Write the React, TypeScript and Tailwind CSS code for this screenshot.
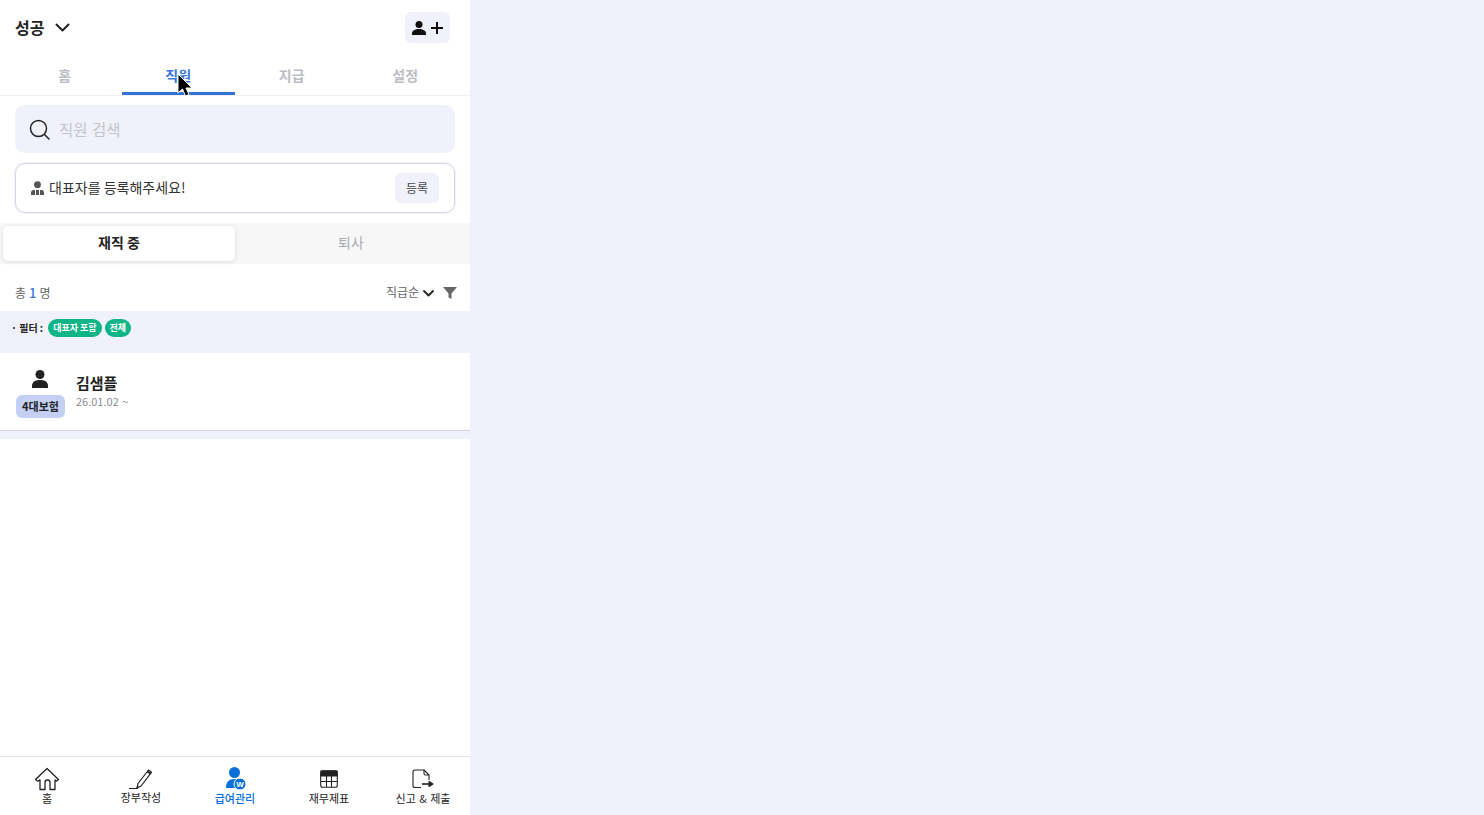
import React from 'react';

const navItems = ['홈', '직원', '지급', '설정'];

const HomeIcon = () => (
    <svg width="26" height="24" viewBox="0 0 26 24" fill="none" stroke="#222" strokeWidth="1.3" strokeLinejoin="round">
        <path d="M1.5 12.5 13 1.5l11.5 11-2.2 1.6-1.3-1.2V22.500h-5V15.500a2.500 2.500 0 0 0-5 0V22.500H6V12.900l-2.300 1.300z" />
    </svg>
);

const PenIcon = () => (
    <svg width="26" height="22" viewBox="0 0 26 22" fill="none" stroke="#222" strokeWidth="1.2" strokeLinejoin="round">
        <path d="M1 20.500h8l1.500-1.500" />
        <path d="M9 20 10 15.500 20.500 2l3 2.300L13 18z" />
        <path d="m19.500 3.500 3 2.300" strokeWidth="2" />
    </svg>
);

const PayIcon = () => (
    <svg className="ml-[1px]" width="20" height="24" viewBox="0 0 20 24">
        <circle cx="8.500" cy="5.500" r="5.500" fill="#0a6fd8" />
        <path d="M0 21c0-6 3-9 8.500-9 2 0 3.500.4 5 1.200A7 7 0 0 0 10 21z" fill="#0a6fd8" />
        <circle cx="14" cy="17" r="6" fill="#0a6fd8" stroke="#fff" strokeWidth="1" />
        <text x="14" y="20" textAnchor="middle" fontSize="8" fontWeight="700" fill="#fff" fontFamily="Liberation Sans">W</text>
    </svg>
);

const TableIcon = () => (
    <svg width="18" height="18" viewBox="0 0 18 18" fill="none" stroke="#222" strokeWidth="1.100">
        <rect x="0.700" y="0.700" width="16.600" height="16.600" rx="2" />
        <path d="M1 1h16v5H1z" fill="#222" />
        <path d="M1 11.500h16M6.500 6v11M11.500 6v11" />
    </svg>
);

const ReportIcon = () => (
    <svg width="22" height="20" viewBox="0 0 22 20" fill="none" stroke="#222" strokeWidth="1.100" strokeLinejoin="round">
        <path d="M9 18.500H3a2 2 0 0 1-2-2V3a2 2 0 0 1 2-2h9l5 5v5" />
        <path d="M12 1v3.500A1.500 1.500 0 0 0 13.500 6H17" />
        <path d="M10 15h8" strokeWidth="1.600" />
        <path d="m17 12.500 4 2.500-4 2.500z" fill="#222" />
    </svg>
);

const App: React.FC = () => {
    return (
        <div className="flex h-[815px] w-full bg-[#eff2fb] font-['Noto_Sans_CJK_KR','Noto_Sans',sans-serif] overflow-hidden">
            <div className="relative flex flex-col w-[470px] h-full bg-white">
                {/* Company header */}
                <div className="flex items-center justify-between h-[55px] pl-[15px] pr-5">
                    <div className="flex items-center gap-[10px]">
                        <span className="text-[16px] leading-[22px] font-bold text-[#222] -mt-[2px]">성공</span>
                        <svg className="ml-[1px]" width="15" height="9" viewBox="0 0 15 9" fill="none" stroke="#222" strokeWidth="2" strokeLinecap="round" strokeLinejoin="round">
                            <path d="m1.500 1.500 6 6 6-6" />
                        </svg>
                    </div>
                    <div className="flex items-center justify-center gap-[5px] w-[45px] h-[31px] rounded-md bg-[#f0f1fa]">
                        <svg width="14" height="14" viewBox="0 0 14 14" fill="#111">
                            <circle cx="7" cy="3.600" r="3.500" />
                            <path d="M0 14v-1.500C0 9.500 3 8 7 8s7 1.500 7 4.500V14z" />
                        </svg>
                        <svg width="12" height="12" viewBox="0 0 12 12" stroke="#111" strokeWidth="2">
                            <path d="M6 0v12M0 6h12" />
                        </svg>
                    </div>
                </div>

                {/* Top tabs */}
                <div className="flex h-[41px] px-[8px] border-b border-[#f0f0f2]">
                    {navItems.map((item, index) => (
                        <div
                            key={item}
                            className={
                                index === 1
                                    ? 'flex-1 h-[40px] pt-[8px] text-center text-[14px] leading-[24px] font-bold text-[#3b78d8] border-b-[3px] border-[#3273d3]'
                                    : 'flex-1 h-[40px] pt-[8px] text-center text-[14px] leading-[24px] font-bold text-[#bcbdc4]'
                            }
                        >
                            {item}
                        </div>
                    ))}
                </div>

                {/* Search */}
                <div className="mx-[15px] mt-[9px] flex items-center gap-[9px] h-[48px] px-[14px] rounded-[10px] bg-[#f0f1fa]">
                    <svg width="21" height="21" viewBox="0 0 21 21" fill="none" stroke="#222" strokeWidth="1.500" strokeLinecap="round">
                        <circle cx="9.500" cy="9.500" r="8" />
                        <path d="m15.500 15.500 4.500 4.500" />
                    </svg>
                    <span className="text-[15.500px] text-[#c3c4cb] mt-[1px] [word-spacing:1px]">직원 검색</span>
                </div>

                {/* Representative notice */}
                <div className="mx-[15px] mt-[10px] flex items-center justify-between h-[50px] pl-[15px] pr-[15px] rounded-[10px] border border-[#d3d5e8] shadow-[0_0_2px_rgba(110,110,170,0.25)]">
                    <div className="flex items-center gap-[5px] -mt-[1px]">
                        <svg width="13" height="14" viewBox="0 0 13 14" fill="#555">
                            <circle cx="6.500" cy="3.700" r="3.400" />
                            <path d="M0 14v-2c0-2 1-3 2.500-3H4v5zM5 9h3v5H5zM9 9h1.500C12 9 13 10 13 12v2H9z" />
                        </svg>
                        <span className="text-[14px] text-[#333]">대표자를 등록해주세요!</span>
                    </div>
                    <div className="flex items-center justify-center w-[44px] h-[30px] rounded-md bg-[#f0f1fa] text-[12px] text-[#444]">등록</div>
                </div>

                {/* Employment status */}
                <div className="mt-[10px] flex h-[41px] p-[3px] pr-0 bg-[#f7f7f8]">
                    <div className="flex items-center justify-center w-[232px] h-[35px] pb-[2px] rounded-[5px] bg-white shadow-[0_1px_4px_rgba(0,0,0,0.12)] text-[14px] font-bold text-[#222]">재직 중</div>
                    <div className="flex-1 flex items-center justify-center h-[35px] pb-[2px] text-[14px] text-[#a9aaaf] pr-[3px]">퇴사</div>
                </div>

                {/* Count and sort */}
                <div className="flex items-center justify-between h-[47px] pt-[11px] pl-[15px] pr-[13px]">
                    <div className="flex items-center gap-[3px] text-[12px] text-[#666]">
                        <span>총</span>
                        <span className="text-[13px] text-[#3b78d8] font-medium">1</span>
                        <span>명</span>
                    </div>
                    <div className="flex items-center">
                        <span className="text-[12px] text-[#666] -mt-[2px]">직급순</span>
                        <svg className="ml-[4px]" width="11" height="7" viewBox="0 0 11 7" fill="none" stroke="#222" strokeWidth="1.800" strokeLinecap="round" strokeLinejoin="round">
                            <path d="m1 1 4.500 4.500L10 1" />
                        </svg>
                        <svg className="ml-[9px]" width="14" height="12" viewBox="0 0 14 12" fill="#666">
                            <path d="M0 0h14L8.500 6.500V12l-3-1.500v-4z" />
                        </svg>
                    </div>
                </div>

                {/* Active filters */}
                <div className="flex items-start h-[42px] pt-[8px] pl-[11px] bg-[#f0f1fa]">
                    <span className="text-[10px] leading-[17px] font-bold text-[#222]">· 필터 :</span>
                    <div className="flex gap-[3px] ml-[5px]">
                        <span className="px-[5px] h-[18px] rounded-full bg-[#0fb586] text-[9px] leading-[18px] font-bold text-white">대표자 포함</span>
                        <span className="px-[5px] h-[18px] rounded-full bg-[#0fb586] text-[9px] leading-[18px] font-bold text-white">전체</span>
                    </div>
                </div>

                {/* Employee row */}
                <div className="flex items-start h-[78px] pl-[16px] border-b border-[#cfd1dc]">
                    <div className="flex flex-col items-center w-[49px] pt-[17px]">
                        <svg className="-ml-[1px]" width="16" height="18" viewBox="0 0 16 18" fill="#222">
                            <circle cx="8" cy="4.500" r="4.500" />
                            <path d="M0 18v-2c0-4 3-6 8-6s8 2 8 6v2z" />
                        </svg>
                        <span className="mt-[7px] w-[49px] h-[23px] rounded-md bg-[#c4cff6] text-center text-[11px] leading-[23px] font-bold text-[#222]">4대보험</span>
                    </div>
                    <div className="ml-[11px] pt-[19px]">
                        <div className="text-[15px] leading-[22px] font-bold text-[#222]">김샘플</div>
                        <div className="text-[11px] leading-[15px] text-[#8a8b92] [word-spacing:1px]">26.01.02 ~</div>
                    </div>
                </div>
                <div className="h-[8px] bg-[#f0f1fa]" />

                <div className="flex-1" />

                {/* Bottom navigation */}
                <div className="grid grid-cols-5 h-[59px] border-t border-[#e2e2e4]">
                    <div className="flex flex-col items-center pt-[10px]">
                        <HomeIcon />
                        <span className="text-[11px] leading-[14px] text-[#222]">홈</span>
                    </div>
                    <div className="flex flex-col items-center pt-[11px]">
                        <PenIcon />
                        <span className="text-[11px] leading-[14px] text-[#222]">장부작성</span>
                    </div>
                    <div className="flex flex-col items-center pt-[10px]">
                        <PayIcon />
                        <span className="text-[11px] leading-[14px] font-medium text-[#0a6fd8]">급여관리</span>
                    </div>
                    <div className="flex flex-col items-center pt-[13px]">
                        <TableIcon />
                        <span className="text-[11px] leading-[14px] text-[#222] mt-[3px]">재무제표</span>
                    </div>
                    <div className="flex flex-col items-center pt-[12px]">
                        <ReportIcon />
                        <span className="text-[11px] leading-[14px] text-[#222] mt-[2px] [word-spacing:1px]">신고 & 제출</span>
                    </div>
                </div>

                {/* Mouse pointer from the capture */}
                <svg className="absolute left-[177px] top-[73px]" width="16" height="24" viewBox="0 0 16 24">
                    <path d="M1 1v19l4.500-4 3 7 3.500-1.500-3-6.500H15z" fill="#000" stroke="#fff" strokeWidth="1" />
                </svg>
            </div>
            <div className="flex-1" />
        </div>
    );
};

export default App;
